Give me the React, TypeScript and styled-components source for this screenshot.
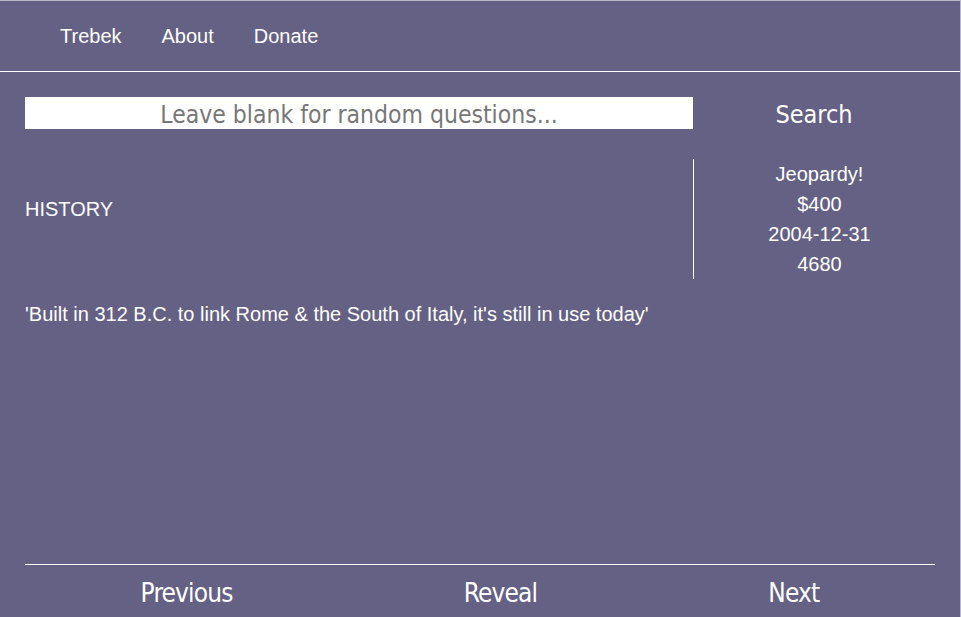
import React from "react";
import styled, { createGlobalStyle } from "styled-components";

const Global = createGlobalStyle`
  html, body { margin: 0; padding: 0; height: 100%; }
  body { background: #656184; }
  #root { height: 100%; }
`;

const Page = styled.div`
  box-sizing: border-box;
  height: 617px;
  display: flex;
  flex-direction: column;
  background: #656184;
  color: #ffffff;
  border-top: 1px solid #b9b8cc;
  border-right: 1px solid #b9b8cc;
  font-family: "Liberation Sans", Arial, sans-serif;
`;

const Nav = styled.nav`
  height: 70px;
  display: flex;
  align-items: center;
  padding-left: 40px;
  border-bottom: 1px solid #ffffff;
`;

const NavLink = styled.a`
  color: #ffffff;
  text-decoration: none;
  font-size: 20px;
  padding: 0 20px;
  margin-top: 1px;
`;

const Main = styled.main`
  flex: 1;
  display: flex;
  flex-direction: column;
  padding: 25px 25px 0 25px;
`;

const SearchRow = styled.div`
  display: flex;
  align-items: center;
  height: 32px;
`;

const SearchInput = styled.input`
  box-sizing: border-box;
  width: 668px;
  height: 32px;
  border: none;
  outline: none;
  background: #ffffff;
  text-align: center;
  font-family: "DejaVu Sans Condensed", "DejaVu Sans", sans-serif;
  font-size: 24.5px;
  padding: 3px 0 0 0;
  &::placeholder { color: #777777; }
`;

const TahomaButton = styled.button`
  background: none;
  border: none;
  color: #ffffff;
  font-family: "DejaVu Sans Condensed", "DejaVu Sans", sans-serif;
  padding: 0;
  cursor: pointer;
`;

const SearchButton = styled(TahomaButton)`
  flex: 1;
  text-align: center;
  font-size: 25px;
  padding-top: 3px;
`;

const InfoRow = styled.div`
  display: flex;
  margin-top: 30px;
  height: 120px;
`;

const Category = styled.div`
  box-sizing: border-box;
  width: 669px;
  border-right: 1px solid #ffffff;
  font-size: 20px;
  line-height: 30px;
  padding-top: 35px;
`;

const Meta = styled.div`
  flex: 1;
  padding-left: 10px;
  text-align: center;
  font-size: 20px;
  line-height: 30px;
`;

const Question = styled.p`
  margin: 20px 0 0 0;
  font-size: 20px;
  line-height: 30px;
`;

const Footer = styled.footer`
  margin-top: auto;
  border-top: 1px solid #ffffff;
  height: 52px;
  display: flex;
  justify-content: space-around;
  align-items: center;
`;

const FooterButton = styled(TahomaButton)`
  font-size: 26px;
  letter-spacing: -0.85px;
  margin-top: 3px;
`;

export default function App() {
  return (
    <>
      <Global />
      <Page>
        <Nav>
          <NavLink href="#">Trebek</NavLink>
          <NavLink href="#">About</NavLink>
          <NavLink href="#">Donate</NavLink>
        </Nav>
        <Main>
          <SearchRow>
            <SearchInput placeholder="Leave blank for random questions..." />
            <SearchButton>Search</SearchButton>
          </SearchRow>
          <InfoRow>
            <Category>HISTORY</Category>
            <Meta>
              <div>Jeopardy!</div>
              <div>$400</div>
              <div>2004-12-31</div>
              <div>4680</div>
            </Meta>
          </InfoRow>
          <Question>
            'Built in 312 B.C. to link Rome &amp; the South of Italy, it's still in use today'
          </Question>
          <Footer>
            <FooterButton>Previous</FooterButton>
            <FooterButton>Reveal</FooterButton>
            <FooterButton>Next</FooterButton>
          </Footer>
        </Main>
      </Page>
    </>
  );
}
